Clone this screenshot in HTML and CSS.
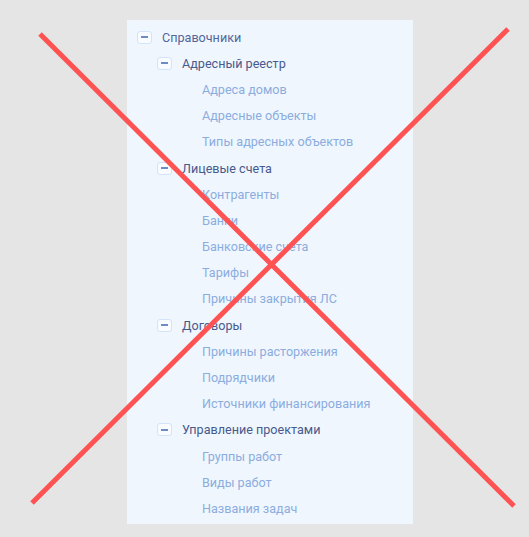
FILE: index.html
```html
<!DOCTYPE html>
<html lang="ru">
<head>
<meta charset="utf-8">
<link rel="stylesheet" href="styles.css">
</head>
<body>
<div class="panel">
  <ul class="tree">
    <li class="row l1"><span class="toggle"></span><span class="label">Справочники</span></li>
    <li class="row l2"><span class="toggle"></span><span class="label">Адресный реестр</span></li>
    <li class="row l3"><span class="label">Адреса домов</span></li>
    <li class="row l3"><span class="label">Адресные объекты</span></li>
    <li class="row l3"><span class="label">Типы адресных объектов</span></li>
    <li class="row l2"><span class="toggle"></span><span class="label">Лицевые счета</span></li>
    <li class="row l3"><span class="label">Контрагенты</span></li>
    <li class="row l3"><span class="label">Банки</span></li>
    <li class="row l3"><span class="label">Банковские счета</span></li>
    <li class="row l3"><span class="label">Тарифы</span></li>
    <li class="row l3"><span class="label">Причины закрытия ЛС</span></li>
    <li class="row l2"><span class="toggle"></span><span class="label">Договоры</span></li>
    <li class="row l3"><span class="label">Причины расторжения</span></li>
    <li class="row l3"><span class="label">Подрядчики</span></li>
    <li class="row l3"><span class="label">Источники финансирования</span></li>
    <li class="row l2"><span class="toggle"></span><span class="label">Управление проектами</span></li>
    <li class="row l3"><span class="label">Группы работ</span></li>
    <li class="row l3"><span class="label">Виды работ</span></li>
    <li class="row l3"><span class="label">Названия задач</span></li>
  </ul>
</div>
<svg class="cross" width="529" height="537" viewBox="0 0 529 537">
  <line x1="40" y1="34" x2="514" y2="506" />
  <line x1="508" y1="29" x2="32" y2="503" />
</svg>
</body>
</html>
```
FILE: styles.css
```css
html, body {
  margin: 0;
  padding: 0;
}
body {
  background: #e5e5e5;
  width: 529px;
  height: 537px;
  position: relative;
  overflow: hidden;
  font-family: Roboto, "Liberation Sans", sans-serif;
  font-size: 12.6px;
}
.panel {
  position: absolute;
  left: 127px;
  top: 20px;
  width: 286px;
  height: 504px;
  background: #f0f6fe;
  box-sizing: border-box;
  padding-top: 4px;
}
.tree {
  list-style: none;
  margin: 0;
  padding: 0;
}
.row {
  height: 26.2px;
  display: flex;
  align-items: center;
  white-space: nowrap;
}
.l1 { padding-left: 10px; }
.l2 { padding-left: 30px; }
.l3 { padding-left: 75px; }
.toggle {
  width: 15px;
  height: 13px;
  box-sizing: border-box;
  border: 1px solid #d3e3f8;
  border-radius: 3px;
  background: #f8fbff;
  margin-right: 10px;
  display: flex;
  align-items: center;
  justify-content: center;
}
.toggle::before {
  content: "";
  width: 7px;
  height: 2px;
  background: #6d8cc4;
}
.l1 .label {
  color: #52669a;
}
.l2 .label {
  color: #475a8c;
}
.l3 .label {
  color: #8badde;
}
.cross {
  position: absolute;
  left: 0;
  top: 0;
  pointer-events: none;
}
.cross line {
  stroke: #ff5252;
  stroke-width: 5;
}
```
